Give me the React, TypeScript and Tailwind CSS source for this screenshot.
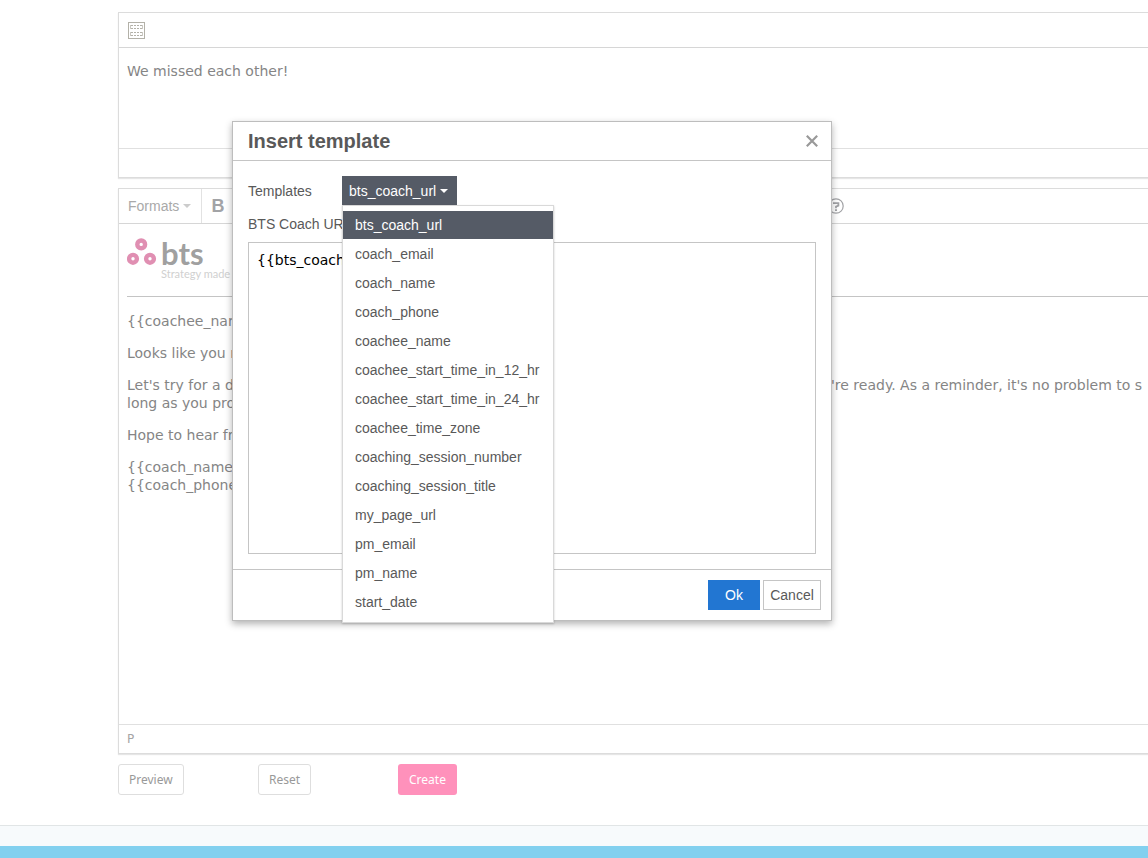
import { useState } from "react";

const templates = [
  "bts_coach_url",
  "coach_email",
  "coach_name",
  "coach_phone",
  "coachee_name",
  "coachee_start_time_in_12_hr",
  "coachee_start_time_in_24_hr",
  "coachee_time_zone",
  "coaching_session_number",
  "coaching_session_title",
  "my_page_url",
  "pm_email",
  "pm_name",
  "start_date",
];

function TemplateIcon() {
  return (
    <svg width="17" height="17" viewBox="0 0 17 17" fill="none" stroke="#b3b1a8" aria-hidden="true">
      <rect x="0.5" y="0.5" width="16" height="16" />
      <path d="M3 3.5h11M3 6.5h11M3 10.5h11M3 13.5h11" strokeDasharray="2 1" />
      <path d="M2.5 3v4M14.5 3v4M2.5 10v4M14.5 10v4" stroke="#cbc9c2" />
    </svg>
  );
}

function HelpIcon() {
  return (
    <svg width="16" height="16" viewBox="0 0 16 16" fill="none" stroke="#a2a3a6" aria-hidden="true">
      <circle cx="8" cy="8" r="7.2" strokeWidth="1.2" />
      <path d="M5 5.2h5.4v2.4L8 8.6v1.6" strokeWidth="1.8" />
      <path d="M7 11.2h2v1.8H7z" fill="#a2a3a6" stroke="none" />
    </svg>
  );
}

function Logo() {
  return (
    <div className="flex h-[44px]">
      <svg width="30" height="30" viewBox="0 0 30 30" fill="none" stroke="#e08fb2" strokeWidth="4.4" aria-hidden="true">
        <circle cx="14.2" cy="6.4" r="3.9" />
        <circle cx="6" cy="20.8" r="3.9" />
        <circle cx="23" cy="20.8" r="3.9" />
      </svg>
      <div className="pl-1">
        <div className="font-['Lato',sans-serif] text-[31px] leading-[30px] font-bold text-[#a0a0a0]">bts</div>
        <div className="font-['Lato',sans-serif] text-[11px] leading-3 whitespace-nowrap text-[#d0d0d0]">Strategy made</div>
      </div>
    </div>
  );
}

export default function App() {
  const [selected, setSelected] = useState("bts_coach_url");
  const [open, setOpen] = useState(true);
  const [showDialog, setShowDialog] = useState(true);

  return (
    <div className="relative overflow-hidden bg-white font-['Liberation_Sans',Arial,sans-serif]">
      <main className="flex flex-col gap-2.5 pt-3 pb-[30px] pl-[118px]">
        <section className="flex flex-col border border-r-0 border-[#dcdcdc] shadow-[0_1px_1px_#e6e6e6]">
          <div className="flex h-[35px] items-center border-b border-[#d6d6d6] pl-[9px]">
            <button type="button" aria-label="Insert template" onClick={() => setShowDialog(true)}>
              <TemplateIcon />
            </button>
          </div>
          <textarea
            aria-label="Subject"
            defaultValue="We missed each other!"
            className="block h-[100px] w-full resize-none px-2 py-3.5 font-['DejaVu_Sans',Verdana,sans-serif] text-[14px] leading-[18px] text-[#858585] outline-none"
          />
          <div className="h-[29px] border-t border-[#e0e0e0]" />
        </section>

        <section className="flex flex-col border border-r-0 border-[#dcdcdc] shadow-[0_1px_1px_#e6e6e6]">
          <div className="flex h-[35px] items-stretch border-b border-[#d6d6d6] text-[#a9a9a9]">
            <button type="button" className="flex w-[83px] items-center gap-1 border-r border-[#e2e2e2] pl-[9px] text-[14px]">
              Formats
              <span className="border-x-4 border-t-4 border-x-transparent border-t-[#cccccc]" />
            </button>
            <button type="button" className="w-8 text-[18px] font-bold text-[#a2a3a6]">
              B
            </button>
            <button type="button" aria-label="Help" className="ml-[594px] flex items-center">
              <HelpIcon />
            </button>
          </div>
          <div className="flex h-[500px] flex-col pt-3.5 pl-2 font-['DejaVu_Sans',Verdana,sans-serif] text-[14px] leading-[18px] whitespace-nowrap text-[#858585]">
            <Logo />
            <hr className="mt-3.5 mb-[15px] border-[#c4c4c4]" />
            <div className="flex flex-col gap-3.5">
              <p>{"{{coachee_name}},"}</p>
              <p>Looks like you missed our session.</p>
              <div>
                <p className="flex">
                  <span className="w-[704px] shrink-0 overflow-hidden">Let's try for a different time. Please book your next session</span>
                  <span>'re ready. As a reminder, it's no problem to s</span>
                </p>
                <p>long as you provide notice.</p>
              </div>
              <p>Hope to hear from you soon,</p>
              <p>
                {"{{coach_name}}"}
                <br />
                {"{{coach_phone}}"}
              </p>
            </div>
          </div>
          <div className="flex h-[29px] items-center border-t border-[#e0e0e0] pl-2 font-['DejaVu_Sans',Verdana,sans-serif] text-[12px] text-[#a5a5a5]">
            P
          </div>
        </section>

        <div className="flex font-['Noto_Sans','Open_Sans',sans-serif] text-[12px] text-[#999999]">
          <div className="w-[140px]">
            <button type="button" className="h-[31px] rounded-[3px] border border-[#dedede] px-2.5">Preview</button>
          </div>
          <div className="w-[140px]">
            <button type="button" className="h-[31px] rounded-[3px] border border-[#dedede] px-2.5">Reset</button>
          </div>
          <button type="button" className="h-[31px] rounded-[3px] bg-[#ff91bb] px-[11px] text-white">Create</button>
        </div>
      </main>

      <footer>
        <div className="h-[21px] border-t border-[#e1e5e6] bg-[#f7fafc]" />
        <div className="h-3 bg-[#82d0ef]" />
      </footer>

      {showDialog && (
        <div
          role="dialog"
          aria-labelledby="dialog-title"
          className="absolute top-[121px] left-[232px] w-[600px] border border-[#bdbdbd] bg-white text-[14px] text-[#595959] shadow-[0_3px_7px_rgba(0,0,0,0.3)]"
        >
          <header className="flex h-[39px] items-center justify-between border-b border-[#c5c5c5] pr-3 pl-[15px]">
            <h1 id="dialog-title" className="text-[20px] leading-6 font-bold">Insert template</h1>
            <button type="button" aria-label="Close" onClick={() => setShowDialog(false)}>
              <svg width="14" height="14" viewBox="0 0 14 14" stroke="#999" strokeWidth="2.2" aria-hidden="true">
                <path d="M1.8 1.8l10.4 10.4M12.2 1.8l-10.4 10.4" />
              </svg>
            </button>
          </header>

          <div className="px-[15px] pt-[15px] pb-[15px]">
            <div className="flex h-[30px] items-center">
              <span id="templates-label" className="w-[94px]">Templates</span>
              <div className="relative">
                <button
                  type="button"
                  aria-labelledby="templates-label"
                  aria-haspopup="listbox"
                  aria-expanded={open}
                  onClick={() => setOpen(!open)}
                  className="flex h-[30px] items-center gap-1 bg-[#555b66] pr-[9px] pl-[7px] text-white"
                >
                  {selected}
                  <span className="border-x-4 border-t-4 border-x-transparent border-t-white" />
                </button>
                {open && (
                  <ul role="listbox" aria-labelledby="templates-label" className="absolute top-[29px] left-0 z-10 flex w-[212px] flex-col gap-px border border-[#d9d9d9] bg-white pt-[5px] pb-1.5 shadow-[0_1px_2px_rgba(0,0,0,0.2)]">
                    {templates.map((name) => (
                      <li
                        key={name}
                        role="option"
                        aria-selected={name === selected}
                        onClick={() => setSelected(name)}
                        className={
                          name === selected
                            ? "h-7 cursor-pointer bg-[#555b66] px-3 leading-7 text-white"
                            : "h-7 cursor-pointer px-3 leading-7"
                        }
                      >
                        {name}
                      </li>
                    ))}
                  </ul>
                )}
              </div>
            </div>
            <label htmlFor="template-body" className="mt-2 mb-2 block leading-5">BTS Coach URL</label>
            <textarea
              id="template-body"
              readOnly
              value={"{{" + selected + "}}"}
              className="block h-[312px] w-full resize-none border border-[#c5c5c5] px-2 py-2 font-['DejaVu_Sans',Verdana,sans-serif] text-[14px] leading-[18px] text-black outline-none"
            />
          </div>

          <footer className="flex h-[51px] items-center justify-end gap-[3px] border-t border-[#c5c5c5] pr-2.5">
            <button type="button" className="h-[30px] w-[52px] bg-[#2276d2] text-white">Ok</button>
            <button type="button" className="h-[30px] w-[58px] border border-[#c5c5c5]" onClick={() => setShowDialog(false)}>Cancel</button>
          </footer>
        </div>
      )}
    </div>
  );
}
